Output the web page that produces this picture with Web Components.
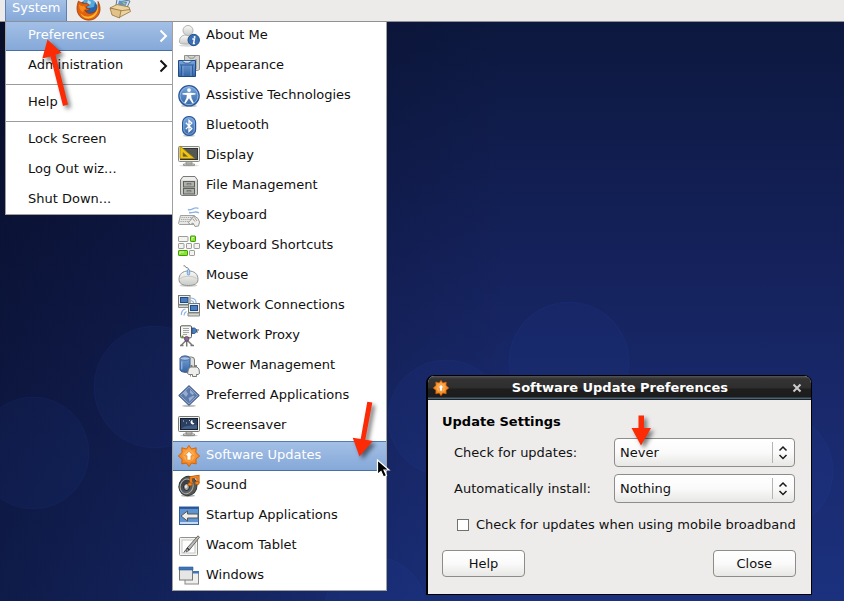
<!DOCTYPE html>
<html lang="en">
<head>
<meta charset="utf-8">
<title>Desktop</title>
<style>
html, body { height: 100%; margin: 0; overflow: hidden; }
body { font: 13px/16px "DejaVu Sans", sans-serif; color: #111; }
.menus { display: flex; align-items: flex-start; }
</style>
</head>
<body>
<desk-top>
  <top-panel slot="panel"></top-panel>
  <div slot="menus" class="menus">
    <menu-box label="System">
      <menu-row selected submenu>Preferences</menu-row>
      <menu-row submenu>Administration</menu-row>
      <menu-separator></menu-separator>
      <menu-row>Help</menu-row>
      <menu-separator></menu-separator>
      <menu-row>Lock Screen</menu-row>
      <menu-row>Log Out wiz...</menu-row>
      <menu-row>Shut Down...</menu-row>
    </menu-box>
    <menu-box label="Preferences" wide>
      <menu-row icon="about">About Me</menu-row>
      <menu-row icon="appearance">Appearance</menu-row>
      <menu-row icon="assistive">Assistive Technologies</menu-row>
      <menu-row icon="bluetooth">Bluetooth</menu-row>
      <menu-row icon="display">Display</menu-row>
      <menu-row icon="files">File Management</menu-row>
      <menu-row icon="keyboard">Keyboard</menu-row>
      <menu-row icon="shortcuts">Keyboard Shortcuts</menu-row>
      <menu-row icon="mouse">Mouse</menu-row>
      <menu-row icon="network">Network Connections</menu-row>
      <menu-row icon="proxy">Network Proxy</menu-row>
      <menu-row icon="power">Power Management</menu-row>
      <menu-row icon="preferred">Preferred Applications</menu-row>
      <menu-row icon="screensaver">Screensaver</menu-row>
      <menu-row icon="updates" selected>Software Updates</menu-row>
      <menu-row icon="sound">Sound</menu-row>
      <menu-row icon="startup">Startup Applications</menu-row>
      <menu-row icon="tablet">Wacom Tablet</menu-row>
      <menu-row icon="windows">Windows</menu-row>
    </menu-box>
  </div>
  <update-dialog slot="window"></update-dialog>
  <pointer-marks slot="marks"></pointer-marks>
</desk-top>

<script>
const GRADS = `<defs>
<linearGradient id="g" x1="0" y1="0" x2="0" y2="1"><stop offset="0" stop-color="#fbfbfa"/><stop offset="1" stop-color="#c9cbc6"/></linearGradient>
<linearGradient id="b" x1="0" y1="0" x2="0" y2="1"><stop offset="0" stop-color="#7ba6dc"/><stop offset="1" stop-color="#3465a4"/></linearGradient>
<radialGradient id="o" cx=".5" cy=".4" r=".6"><stop offset="0" stop-color="#ffb257"/><stop offset="1" stop-color="#f07a10"/></radialGradient>
<linearGradient id="k" x1="0" y1="0" x2="1" y2="1"><stop offset="0" stop-color="#2c3036"/><stop offset="1" stop-color="#6a7078"/></linearGradient>
</defs>`;

const ICONS = {
about: `<ellipse cx="9" cy="20.500" rx="8" ry="1.200" fill="#000" opacity=".15"/>
<path d="M1.500 17.500C1 13 3.500 10 8 10s7 3 6.500 7.500c-.2 2-12.800 2-13 0Z" fill="url(#g)" stroke="#b2b4b0"/>
<circle cx="10" cy="5.500" r="5" fill="url(#g)" stroke="#b2b4b0"/>
<circle cx="15.700" cy="15" r="5.700" fill="#3b6fb4" stroke="#234f8c"/>
<circle cx="16.600" cy="11.900" r="1" fill="#fff"/><path d="M14.300 14h2.200l-1 4.500h1.400" stroke="#fff" stroke-width="1.400" fill="none"/>`,
appearance: `<path d="M6.500.5h15v14l-2 1h-13Z" fill="#d3d5cf" stroke="#8f918c"/>
<path d="M10 1c0 3 7 3 7 0M9 5v9M18 4v10" stroke="#888a85" fill="none"/>
<path d="M.5 5.500h17v16H.5Z" fill="url(#b)" stroke="#204a87"/>
<path d="M4.500 5.500c0 3.500 9 3.500 9 0Z" fill="#d7e4f5" stroke="#204a87" stroke-width=".8"/>
<path d="M3.500 10.500v10.500M14.500 10.500v10.500" stroke="#2c5b9c" fill="none"/><path d="M5 10.500v10.500M13 10.500v10.500" stroke="#8db3e2" stroke-width=".6"/><path d="M2 10h14" stroke="#2c5b9c" fill="none"/>`,
assistive: `<ellipse cx="11" cy="21" rx="8" ry="1" fill="#000" opacity=".25"/>
<circle cx="11" cy="10.800" r="10.200" fill="url(#b)" stroke="#29579a" stroke-width="1.200"/><circle cx="11" cy="10.800" r="8.900" fill="none" stroke="#8db3e2"/>
<circle cx="11" cy="5.100" r="1.900" fill="#fff"/>
<path d="M4.500 8.200l5-.4h3l5 .4v1.200l-4.300.6.300 3 2.300 4.800-1.300.6-3.500-5.200-3.500 5.200-1.300-.6L8.500 13l.3-3-4.300-.6Z" fill="#fff"/>`,
bluetooth: `<ellipse cx="11" cy="20.800" rx="6" ry="1" fill="#000" opacity=".2"/>
<rect x="4.600" y="1.600" width="13" height="18.800" rx="6" fill="url(#b)" stroke="#29579a" stroke-width="1.200"/><rect x="5.800" y="2.800" width="10.600" height="16.400" rx="5" fill="none" stroke="#8db3e2" stroke-width=".8"/>
<path d="M7.800 7.800l6 6-2.800 2.700V5.500l2.800 2.600-6 6" fill="none" stroke="#fff" stroke-width="1.300"/>`,
display: `<ellipse cx="11" cy="20.500" rx="10" ry="1.200" fill="#000" opacity=".12"/>
<rect x=".5" y="1.500" width="21" height="15" rx="1" fill="#eeeeec" stroke="#888a85"/>
<rect x="2.500" y="3.500" width="17" height="11" fill="#555753" stroke="#2e3436"/>
<path d="M2 1l14.500 12.500H2Z" fill="#edc417" stroke="#a58400" stroke-width=".8"/><path d="M5 7.500l4.500 3.900H5Z" fill="#555753" stroke="#a58400" stroke-width=".7"/>
<path d="M8 17h6v2H8ZM5.500 19h11v1.500h-11Z" fill="#d3d7cf" stroke="#888a85" stroke-width=".8"/>`,
files: `<path d="M4 20.500l-1.500-1V5L5 1.500h12L19.500 5v14.500l-1.500 1Z" fill="#cfd1cc" stroke="#777974"/>
<path d="M3 5.500L5.500 2h11L19 5.500Z" fill="#eeeeec"/>
<rect x="5.500" y="6.500" width="11" height="5.500" fill="#aeb1ab" stroke="#5d605b"/><rect x="5.500" y="13.500" width="11" height="5.500" fill="#aeb1ab" stroke="#5d605b"/>
<path d="M9 8.500h4v1.200H9ZM9 15.500h4v1.200H9Z" fill="#fff" stroke="#555753" stroke-width=".7"/>`,
keyboard: `<path d="M20.500 3.500C16 1 14 6 10 4.500M21 8c-4-2.500-6 .5-10-.5" stroke="#8eb4e3" stroke-width="1.400" fill="none"/>
<path d="M2.500 10.500h14l4.500 8-2 1H1.500l-1-1Z" fill="#e6e7e4" stroke="#9fa19c"/>
<path d="M3.500 12.500h12M3 14.500h13M2.500 16.500h12" stroke="#a9aba6" stroke-width="1.200" stroke-dasharray="1.300 .8"/>
<path d="M10 17.500l2.500-2 2-3.500 2.500-.5 3 2 1.500 3.500-1 4-3.500.5-2-3.500-2.500 1.500Z" fill="#eeeeec" stroke="#999b96"/><path d="M14.500 13.500l2.500 3M16.500 12.500l2.500 3.500" stroke="#888a85" stroke-width=".8"/>`,
shortcuts: `<g fill="#f3f3f2" stroke="#9a9c97"><rect x=".5" y="1.500" width="9.500" height="5" rx=".6"/><rect x=".5" y="8.500" width="5.500" height="5" rx=".6"/><rect x="8.500" y="8.500" width="5" height="5" rx=".6"/><rect x="16" y="8.500" width="5.500" height="5" rx=".6"/><rect x="11.500" y="15.500" width="5" height="5" rx=".6"/></g>
<g fill="#8ae234" stroke="#3f9c05"><rect x="12.500" y="1" width="5" height="5.500" rx=".6"/><rect x=".5" y="15.500" width="9" height="5" rx=".6"/></g>
<path d="M14 5V2.500h2M2 19v-2h4" stroke="#d4f7ae" fill="none"/>`,
mouse: `<ellipse cx="10.500" cy="20.500" rx="9" ry="1.500" fill="#000" opacity=".18"/>
<path d="M5.500 .8c3-.5 1 1.800 3.500 2s1.200 2.200 1.400 4" stroke="#7a7c77" fill="none"/>
<path d="M1 14.500C1 9 4.500 6 10.500 6S20 9 20 14.500c0 4-3.500 6-9.500 6s-9.500-2-9.500-6Z" fill="url(#g)" stroke="#92948f"/>
<path d="M2.500 13.500c4-3 12-3 16 0" stroke="#c8cac5" fill="none"/>
<rect x="9.300" y="4.500" width="2.400" height="5.500" rx="1.200" fill="#b9d3f2" stroke="#5c8fcb" stroke-width=".8"/>`,
network: `<path d="M13 3c3 .2 5 2 5.200 5M13 5.500c1.500.2 2.500 1 2.700 2.500" stroke="#8eb4e3" fill="none" stroke-width="1.200"/>
<path d="M3.500 20c-.5-3 1-5.500 4-6M6 20.500c0-2 .5-3 2.500-4" stroke="#8eb4e3" fill="none" stroke-width="1.200"/>
<rect x=".5" y=".5" width="11.500" height="9" fill="#eeeeec" stroke="#777974"/><rect x="2.500" y="2.500" width="7.500" height="5" fill="#4a7dbd" stroke="#204a87"/><path d="M.5 10h11.500v2.500H.5Z" fill="#d3d7cf" stroke="#888a85"/>
<rect x="10.500" y="8.500" width="11" height="9" fill="#eeeeec" stroke="#777974"/><rect x="12.500" y="10.500" width="7" height="5" fill="#4a7dbd" stroke="#204a87"/><path d="M10 18h11.500v3H10Z" fill="#d3d7cf" stroke="#888a85"/>`,
proxy: `<rect x="2.500" y=".8" width="11" height="12" rx="1.200" fill="#f5f5f4" stroke="#555753"/>
<path d="M5 3.500h6M5 5.500h6M5 7.500h6M5 9.500h4" stroke="#a3a5a0"/>
<path d="M14 3h2.500l2 1.500v2.500l-2 1.500H14Z" fill="#4a7dbd" stroke="#204a87" stroke-width=".8"/><path d="M18.500 5h2.500M18.500 7h1.500" stroke="#555" stroke-width="1"/>
<circle cx="4.500" cy="11.500" r="1.100" fill="#4e9a06"/>
<path d="M8.700 13v8.500M8.500 15L3 20.500M9 15l5.500 5.500M2 20.500h3.500M12.500 20.500h3.500" stroke="#777974" stroke-width="1.500" fill="none"/>
<circle cx="8.700" cy="13.800" r="2.300" fill="#8d6494" stroke="#50345a" stroke-width=".7"/>`,
power: `<rect x="5.500" y="2" width="11" height="15.500" rx="3" fill="#dfe0dd" stroke="#777974"/>
<path d="M2 3.500C3 0 11 0 12 3.500v11.500c-1.500 3-8.500 3-10 0Z" fill="url(#b)" stroke="#3d5f8f"/><ellipse cx="7" cy="3.500" rx="4.800" ry="1.800" fill="#a9c4e8" stroke="#3d5f8f" stroke-width=".8"/><path d="M3.800 6.500v8" stroke="#a9c4e8"/>
<path d="M13.500 10v3M18 10v3" stroke="#777974" stroke-width="1.800"/>
<path d="M10.500 14l2-2h6.500l2 2 .5 4.500-1.500 1h-1.500v2h-4v-2H11l-1.500-1Z" fill="#eeeeec" stroke="#777974"/><path d="M12.500 19v2.500M18.500 19v2.500" stroke="#888a85"/>`,
preferred: `<ellipse cx="11" cy="20.800" rx="7" ry="1.200" fill="#000" opacity=".25"/>
<path d="M11 .6L21.300 10.500 11 20.400.7 10.500Z" fill="#5b79aa" stroke="#3d5583"/><path d="M11 2.200l8.600 8.300-8.600 8.300-8.600-8.300Z" fill="none" stroke="#9db2d4" stroke-width=".8"/>
<path d="M5 8.500L8 5.500l2 3.500-2 3ZM12 4.500l4 4-1.500 1.500-2.500-2ZM10.500 13l3-1.500 2-1 1 1-5 5Z" fill="#c2cfe4" opacity=".6"/>`,
screensaver: `<ellipse cx="11" cy="20.500" rx="9" ry="1.200" fill="#000" opacity=".2"/>
<rect x=".5" y="1.500" width="21" height="15" rx="1" fill="#eeeeec" stroke="#777974"/>
<rect x="2.500" y="3.500" width="17" height="11" fill="#2b3f60" stroke="#15202f"/>
<path d="M3 14c4-4 9-3 16-4v4Z" fill="#4d6b96" opacity=".7"/><path d="M14.500 5a2.200 2.200 0 1 0 2 3.500 2.800 2.800 0 0 1-2-3.500Z" fill="#fff"/><path d="M5 6h1M8 8h1M11 5.500h1" stroke="#b7c9e5"/>
<path d="M8 17h6v2H8ZM5.500 19h11v1.500h-11Z" fill="#eeeeec" stroke="#777974" stroke-width=".8"/>`,
updates: `<path d="M11 .4l2.500 3.700 4.700-1.300-.3 4.700 3.800 3.500-3.800 3.200.3 4.700-4.700-.9L11 21.600 8.500 18l-4.700.9.300-4.700L.3 11l3.800-3.500-.3-4.700 4.700 1.300Z" fill="url(#o)" stroke="#d45f00" stroke-width=".9"/>
<circle cx="11" cy="11" r="5.500" fill="#fbb25c" opacity=".7"/>
<path d="M11 6.200l4.300 4.500h-2.300v4.500H9v-4.500H6.700Z" fill="#fff" stroke="#e67400" stroke-width=".7"/>`,
sound: `<ellipse cx="10" cy="20.700" rx="7" ry="1.200" fill="#000" opacity=".3"/>
<ellipse cx="10" cy="11" rx="9" ry="9.700" transform="rotate(20 10 11)" fill="#555753" stroke="#2e3436"/><ellipse cx="8.800" cy="11.500" rx="6.400" ry="7.400" transform="rotate(20 9 11)" fill="url(#k)" stroke="#aaaca8"/>
<ellipse cx="8.500" cy="12" rx="2.900" ry="3.500" fill="#a9aba7" stroke="#1d2021"/><ellipse cx="8" cy="11.500" rx="1.200" ry="1.500" fill="#e5e5e4"/>
<path d="M13 9V2.500L20 1.500v6.500" stroke="#a14a00" stroke-width="3" fill="none"/><path d="M13 9V2.500L20 1.500v6.500" stroke="#f58220" stroke-width="1.800" fill="none"/><ellipse cx="12" cy="9.300" rx="2.200" ry="1.700" fill="#f58220" stroke="#a14a00" stroke-width=".7"/><ellipse cx="19" cy="8" rx="2.200" ry="1.700" fill="#f58220" stroke="#a14a00" stroke-width=".7"/>`,
startup: `<rect x="1.500" y="2" width="19" height="17.500" fill="#5f93d2" stroke="#2f5f9f"/><path d="M2 3h18" stroke="#204a87" stroke-width="1.500"/><path d="M2 17h18v2H2Z" fill="#c8daf1"/>
<path d="M3 11l6.500-5v3H20v4H9.500v3Z" fill="#eeeeec" stroke="#555753"/>`,
tablet: `<rect x="1.500" y="2.500" width="18" height="18" rx="1" fill="#f5f5f4" stroke="#8f918c"/><rect x="4" y="5" width="13" height="13" fill="#fff" stroke="#c5c7c2"/>
<path d="M6 17.500c1-1.500 1-3 3.500-3" stroke="#2e3436" fill="none"/>
<path d="M20 .8l1.500 1.500L11 15.500l-3 1.500.6-3.500Z" fill="#b9bbb6" stroke="#4c4e4b" stroke-width=".8"/><path d="M9 13l2.500 2" stroke="#2e3436" stroke-width="1.500"/>`,
windows: `<rect x="7" y="6.500" width="13.500" height="12.500" fill="#eeeeec" stroke="#888a85"/><path d="M6.500 6h14.500v2.500H6.500Z" fill="#3f74b7"/>
<rect x="1.500" y="2.500" width="13" height="12.500" fill="#e6e7e5" stroke="#777974"/><path d="M1 2h14v3H1Z" fill="#3f74b7" stroke="#2b5a99" stroke-width=".6"/>`,
firefox: `<circle cx="11.500" cy="9" r="9.500" fill="#2864ab"/><path d="M6 1c4-3 10-2 12 1l-1 5-5 1-4-1Z" fill="#54a8dd"/><path d="M11 0l3 2-1 3-3-1Z" fill="#b9e2f3"/>
<path d="M1.500 1C-.5 6-1 12 3 16.500c5 5 14 5 18-1 3-4 2.500-10 0-14 .5 5-.5 9-4.500 11-4 1.800-7 .5-8.500-2 2 .5 4 0 5-1.500C11.500 8.500 10 9 9 7.500c0-1 2-2 3.500-2.500C11 3.500 9 3 7.500 3.500 5.500 3 3 2.500 1.500 1Z" fill="#e2600e" stroke="#8f3006" stroke-width=".7"/>
<path d="M20.500 3c1 6-2 11.500-7 13s-8-.5-10-3c1 3.500 4 5.500 8.500 5.500 7-.5 11-8 8.500-15.500Z" fill="#fbb72d"/><path d="M2 4.500c1 1 3 2 5 1.500L9 8.500c-2 1-3 2-2.500 4C3.500 11.500 2 8 2 4.500Z" fill="#f58b1c"/>`,
mail: `<path d="M8-1l13 2-3 6.500-11-2Z" fill="#dbe7f2" stroke="#5d7a96"/><path d="M10 .5l8.500 1.300-2 4.200-7.500-1.500Z" fill="#5f93c8"/><path d="M13 1.500l2 3 2-.5Z" fill="#b6d45e"/>
<path d="M1 8l7-3.500L20 7l1.500 4.500L10 17.500Z" fill="#ecd3a0" stroke="#94733b" stroke-width=".8"/><path d="M1 8l9.500 3L21 9.500" fill="none" stroke="#94733b" stroke-width=".8"/>
<path d="M1 8l2 7 7.500 3 1.500-7.500Z" fill="#e2c288" stroke="#94733b" stroke-width=".8"/>`
};

function define(name, css, html) {
  customElements.define(name, class extends HTMLElement {
    constructor() {
      super();
      this.attachShadow({ mode: "open" });
    }
    connectedCallback() {
      if (this.shadowRoot.childNodes.length) return;
      const t = document.createElement("template");
      t.innerHTML = `<style>${css}</style>` + (typeof html === "function" ? html(this) : html);
      this.shadowRoot.append(t.content.cloneNode(true));
    }
  });
}

define("app-icon", `:host{display:block;flex:none;width:22px;height:22px}svg{display:block;width:100%;height:100%;overflow:visible}`,
  el => `<svg viewBox="0 0 22 22" aria-hidden="true">${GRADS}${ICONS[el.getAttribute("name")]}</svg>`);

define("menu-separator", `:host{display:block;padding:3px 0}hr{margin:0;border:0;border-top:1px solid #9c9c9c}`, `<hr>`);

define("menu-row", `
:host{display:block}
button{display:flex;align-items:center;gap:6px;box-sizing:border-box;width:100%;height:30px;padding:0 4px 0 22px;border:0;background:none;font:inherit;color:inherit;text-align:left;white-space:nowrap}
:host([icon]) button{padding-left:5px}
:host([selected]) button{color:#fff;background:linear-gradient(#a4c0e6,#84a8d8);box-shadow:inset 0 1px #567bb0,inset 0 -1px #486fa6}
span{flex:1;padding-bottom:2px}
svg{width:9px;height:14px}`,
  el => `<button type="button" role="menuitem">${el.hasAttribute("icon") ? `<app-icon name="${el.getAttribute("icon")}"></app-icon>` : ""}<span><slot></slot></span>${el.hasAttribute("submenu") ? `<svg viewBox="0 0 9 14" aria-hidden="true"><path d="M1.500 1.500L7 7l-5.500 5.500" fill="none" stroke="currentColor" stroke-width="2"/></svg>` : ""}</button>`);

define("menu-box", `
:host{display:block;box-sizing:border-box;min-width:167px;background:#fff;border-left:1px solid #a0a09c;box-shadow:inset 0 -1px #a0a09c}
:host([wide]){min-width:215px;border-right:1px solid #a0a09c}`,
  el => `<div role="menu" aria-label="${el.getAttribute("label")}"><slot></slot></div>`);

define("top-panel", `
:host{display:flex;box-sizing:border-box;height:22px;padding-left:5px;background:#edebe9;border-bottom:1px solid #8f9196;overflow:hidden}
nav,.launch{display:flex;align-items:flex-start;gap:10px}
.system{height:21px;border:0;border-left:1px solid #5b80b5;border-right:1px solid #5b80b5;padding:0 6px 5px;background:linear-gradient(#a4c0e6,#84a8d8);font:inherit;color:#fff}
a{display:block}`,
  `<nav><button type="button" class="system">System</button><div class="launch"><a href="#" aria-label="Web browser"><app-icon name="firefox"></app-icon></a><a href="#" aria-label="Mail"><app-icon name="mail"></app-icon></a></div></nav>`);

define("combo-box", `
:host{display:block;position:relative}
select{appearance:none;display:block;box-sizing:border-box;width:100%;height:29px;padding:0 28px 0 5px;border:1px solid #8e8c88;border-radius:4px;background:linear-gradient(#fff,#fafafa 50%,#e7e7e5);font:inherit;color:inherit}
svg{position:absolute;top:4px;right:7px;width:16px;height:21px;pointer-events:none}`,
  el => `<select aria-label="${el.getAttribute("label")}"><option>${el.getAttribute("value")}</option></select>
<svg viewBox="0 0 16 21" aria-hidden="true"><path d="M.5 0v21" stroke="#b5b4b1"/><path d="M7.500 8.500l3.500-3.500 3.500 3.500M7.500 13l3.500 3.500L14.500 13" fill="none" stroke="#1a1a1a" stroke-width="1.500"/></svg>`);

define("update-dialog", `
:host{display:block;background:#edeceb;border:1px solid #000;border-left-width:2px;border-radius:8px 8px 0 0;overflow:hidden}
header{display:flex;align-items:center;height:24px;padding:0 8px 0 5px;background:linear-gradient(#555,#333 12%,#2e2e2e 50%,#1e1e1e 54%,#1c1c1c 86%,#4d6679 94%,#000);color:#fff}
header app-icon{width:16px;height:16px}
h1{flex:1;margin:0;font:bold 13px/16px "DejaVu Sans",sans-serif;text-align:center}
header button{display:block;width:12px;height:12px;padding:0;border:0;background:none;color:#ccc}
header svg{display:block;width:12px;height:12px}
form{padding:14px 15px 17px 14px}
h2{margin:0 0 8px;font:bold 13px/16px "DejaVu Sans",sans-serif;color:#000}
.grid{display:grid;grid-template-columns:max-content 1fr;align-items:center;gap:7px 23px;padding:0 1px 0 12px}
.check{display:flex;align-items:center;gap:7px;padding:14px 0 17px 15px;white-space:nowrap}
input{appearance:none;box-sizing:border-box;width:12px;height:12px;margin:0;border:1px solid #73716e;background:#fff}
footer{display:flex;justify-content:space-between}
footer button{width:83px;height:27px;padding:0;border:1px solid #8e8c88;border-radius:4px;background:linear-gradient(#fff,#fafafa 50%,#e7e7e5);font:inherit;color:inherit}`,
`<header><app-icon name="updates"></app-icon><h1>Software Update Preferences</h1><button type="button" aria-label="Close window"><svg viewBox="0 0 12 12"><path d="M2.500 2.500l7 7M9.500 2.500l-7 7" stroke="currentColor" stroke-width="2"/></svg></button></header>
<form><h2>Update Settings</h2>
<div class="grid"><span>Check for updates:</span><combo-box label="Check for updates:" value="Never"></combo-box>
<span>Automatically install:</span><combo-box label="Automatically install:" value="Nothing"></combo-box></div>
<div class="check"><input type="checkbox" id="mobile"><label for="mobile">Check for updates when using mobile broadband</label></div>
<footer><button type="button">Help</button><button type="button">Close</button></footer></form>`);

define("pointer-marks", `:host{display:block;pointer-events:none}svg{display:block;width:844px;height:601px}.s{filter:drop-shadow(3px 3px 2px rgba(0,0,0,.5))}`,
`<svg viewBox="0 0 844 601" aria-hidden="true"><g class="s" fill="#fc2a05">
<path d="M47.500 39.500L61.500 52.700l-6 2L68 104.500l-5 1.500L50.500 56.500l-8.200 2Z"/>
<path d="M367.300 401.800l5 .8-7 37.200 7.500 1.200L359.500 456.500 352.700 437.700l8 1.300Z"/>
<path d="M638.500 415.500h5.500V428h7L641 445.500 631.500 428h7Z"/></g>
<path d="M377.500 460v14.500l3.500-3 2.500 5.500 3-1.500-2.500-5.500h5Z" fill="#000" stroke="#fff" stroke-width="1.200"/></svg>`);

define("desk-top", `
:host{display:block;position:relative;height:100%;overflow:hidden;background:linear-gradient(90deg,rgba(2,5,20,.5),rgba(2,5,20,0) 60%),linear-gradient(#0c173c,#14215a 42%,#19296c 70%,#1b317e)}
.wall{position:absolute;inset:0;width:100%;height:100%}
.panel{position:relative;z-index:2}
.menus{position:absolute;left:5px;top:21px}
.window{position:absolute;left:426px;top:375px}
.marks{position:absolute;left:0;top:0;z-index:3;pointer-events:none}`,
`<svg class="wall" viewBox="0 0 844 601" preserveAspectRatio="xMidYMid slice" aria-hidden="true"><g fill="#3158c0" fill-opacity=".07" stroke="#4068d0" stroke-opacity=".07"><circle cx="33" cy="453" r="56"/><circle cx="155" cy="387" r="61"/><circle cx="569" cy="362" r="60"/><circle cx="446" cy="418" r="58"/><circle cx="774" cy="471" r="59"/><circle cx="375" cy="607" r="50"/></g></svg>
<div class="panel"><slot name="panel"></slot></div><div class="menus"><slot name="menus"></slot></div><div class="window"><slot name="window"></slot></div><div class="marks"><slot name="marks"></slot></div>`);
</script>
</body>
</html>
